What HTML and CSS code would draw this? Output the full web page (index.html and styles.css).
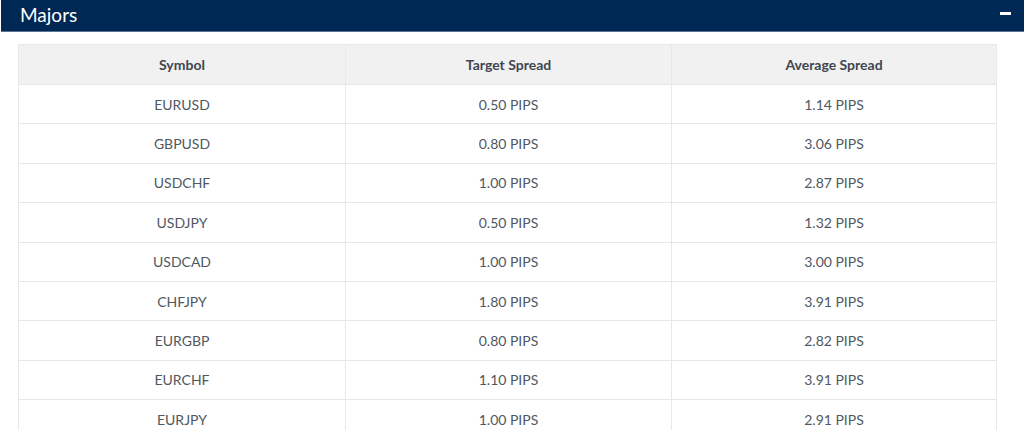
FILE: index.html
```html
<!DOCTYPE html>
<html>
<head>
<meta charset="utf-8">
<link rel="stylesheet" href="styles.css">
</head>
<body>
<div class="panel-head">
  <span class="panel-title">Majors</span>
  <span class="collapse" aria-label="collapse"></span>
</div>
<div class="spreads" role="table">
  <div class="cell head">Symbol</div><div class="cell head">Target Spread</div><div class="cell head">Average Spread</div>
  <div class="cell">EURUSD</div><div class="cell">0.50 PIPS</div><div class="cell">1.14 PIPS</div>
  <div class="cell">GBPUSD</div><div class="cell">0.80 PIPS</div><div class="cell">3.06 PIPS</div>
  <div class="cell">USDCHF</div><div class="cell">1.00 PIPS</div><div class="cell">2.87 PIPS</div>
  <div class="cell">USDJPY</div><div class="cell">0.50 PIPS</div><div class="cell">1.32 PIPS</div>
  <div class="cell">USDCAD</div><div class="cell">1.00 PIPS</div><div class="cell">3.00 PIPS</div>
  <div class="cell">CHFJPY</div><div class="cell">1.80 PIPS</div><div class="cell">3.91 PIPS</div>
  <div class="cell">EURGBP</div><div class="cell">0.80 PIPS</div><div class="cell">2.82 PIPS</div>
  <div class="cell">EURCHF</div><div class="cell">1.10 PIPS</div><div class="cell">3.91 PIPS</div>
  <div class="cell">EURJPY</div><div class="cell">1.00 PIPS</div><div class="cell">2.91 PIPS</div>
</div>
</body>
</html>
```

FILE: styles.css
```css
html, body {
  margin: 0;
  padding: 0;
  background: #fff;
  font-family: Lato, "Liberation Sans", sans-serif;
}
.panel-head {
  margin-left: 1px;
  height: 31px;
  border-bottom: 1px solid #5c7494;
  background: #002855;
  display: flex;
  align-items: center;
  justify-content: space-between;
  padding: 0 13px 0 19px;
}
.panel-title {
  color: #fff;
  font-size: 19px;
  line-height: 31px;
  margin-top: -3px;
}
.collapse {
  width: 11px;
  height: 3px;
  background: #fff;
  margin-top: -4px;
}
.spreads {
  margin: 12px 0 0 18px;
  width: 979px;
  box-sizing: border-box;
  display: grid;
  grid-template-columns: 327px 326px 1fr;
  grid-template-rows: 40px;
  grid-auto-rows: 39.375px;
  border-top: 1px solid #e8e8e8;
  border-left: 1px solid #e8e8e8;
  font-size: 14px;
  color: #4f5862;
}
.cell {
  border-right: 1px solid #e8e8e8;
  border-bottom: 1px solid #e8e8e8;
  display: flex;
  align-items: center;
  justify-content: center;
}
.cell.head {
  background: #f1f1f1;
  color: #3f4650;
  font-weight: 700;
}
```
